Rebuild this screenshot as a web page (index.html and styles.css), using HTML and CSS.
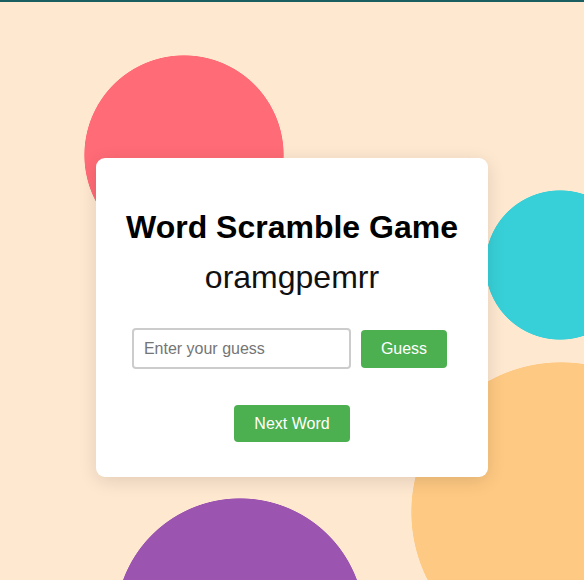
FILE: index.html
```html
<!DOCTYPE html>
<html lang="en">
<head>
<meta charset="utf-8">
<title>Word Scramble Game</title>
<link rel="stylesheet" href="styles.css">
</head>
<body>
  <main class="card">
    <h1 class="title">Word Scramble Game</h1>
    <div class="word">oramgpemrr</div>
    <div class="guess-row">
      <input class="guess-input" type="text" placeholder="Enter your guess">
      <button class="btn">Guess</button>
    </div>
    <div class="next-row">
      <button class="btn btn-next">Next Word</button>
    </div>
  </main>
</body>
</html>
```
FILE: styles.css
```css
html, body {
  margin: 0;
  padding: 0;
}

body {
  height: 580px;
  box-sizing: border-box;
  border-top: 2px solid #1b5e62;
  overflow: hidden;
  font-family: "Liberation Sans", Arial, sans-serif;
  background-color: #ffe8d0;
  background-origin: border-box;
  background-image:
    radial-gradient(circle 100px at 184px 155px, #ff6b76 99.3px, rgba(255,107,118,0) 100px),
    radial-gradient(circle 75px at 560px 265px, #38d0d8 74.3px, rgba(56,208,216,0) 75px),
    radial-gradient(circle 150px at 561px 512px, #fec982 149.3px, rgba(254,201,130,0) 150px),
    radial-gradient(circle 125px at 240px 623px, #9b55b1 124.3px, rgba(155,85,177,0) 125px);
  background-repeat: no-repeat;
}

.card {
  width: 392px;
  box-sizing: border-box;
  margin: 156px auto 0;
  padding: 30px 30px 35px;
  background: #ffffff;
  border-radius: 9px;
  box-shadow: 0 4px 18px rgba(0, 0, 0, 0.12);
  text-align: center;
}

.title {
  margin: 21px 0 0;
  font-size: 32px;
  line-height: 37px;
  font-weight: bold;
  color: #000;
}

.word {
  margin-top: 13px;
  font-size: 32px;
  line-height: 37px;
  color: #111;
}

.guess-row {
  margin-top: 32px;
  display: flex;
  justify-content: center;
  align-items: center;
  gap: 10px;
  padding-right: 5px;
}

.guess-input {
  box-sizing: border-box;
  width: 219px;
  height: 41px;
  margin: 0;
  padding: 0 10px;
  border: 2px solid #cccccc;
  border-radius: 4px;
  font-family: "Liberation Sans", Arial, sans-serif;
  font-size: 16px;
  color: #333;
  background: #fff;
  outline: none;
}

.guess-input::placeholder {
  color: #757575;
}

.btn {
  margin: 0;
  padding: 10px 20px;
  border: none;
  border-radius: 4px;
  background: #4caf50;
  color: #ffffff;
  font-family: "Liberation Sans", Arial, sans-serif;
  font-size: 16px;
  line-height: 18px;
  cursor: pointer;
}

.next-row {
  margin-top: 36px;
  display: flex;
  justify-content: center;
}

.btn-next {
  line-height: 17px;
}
```
